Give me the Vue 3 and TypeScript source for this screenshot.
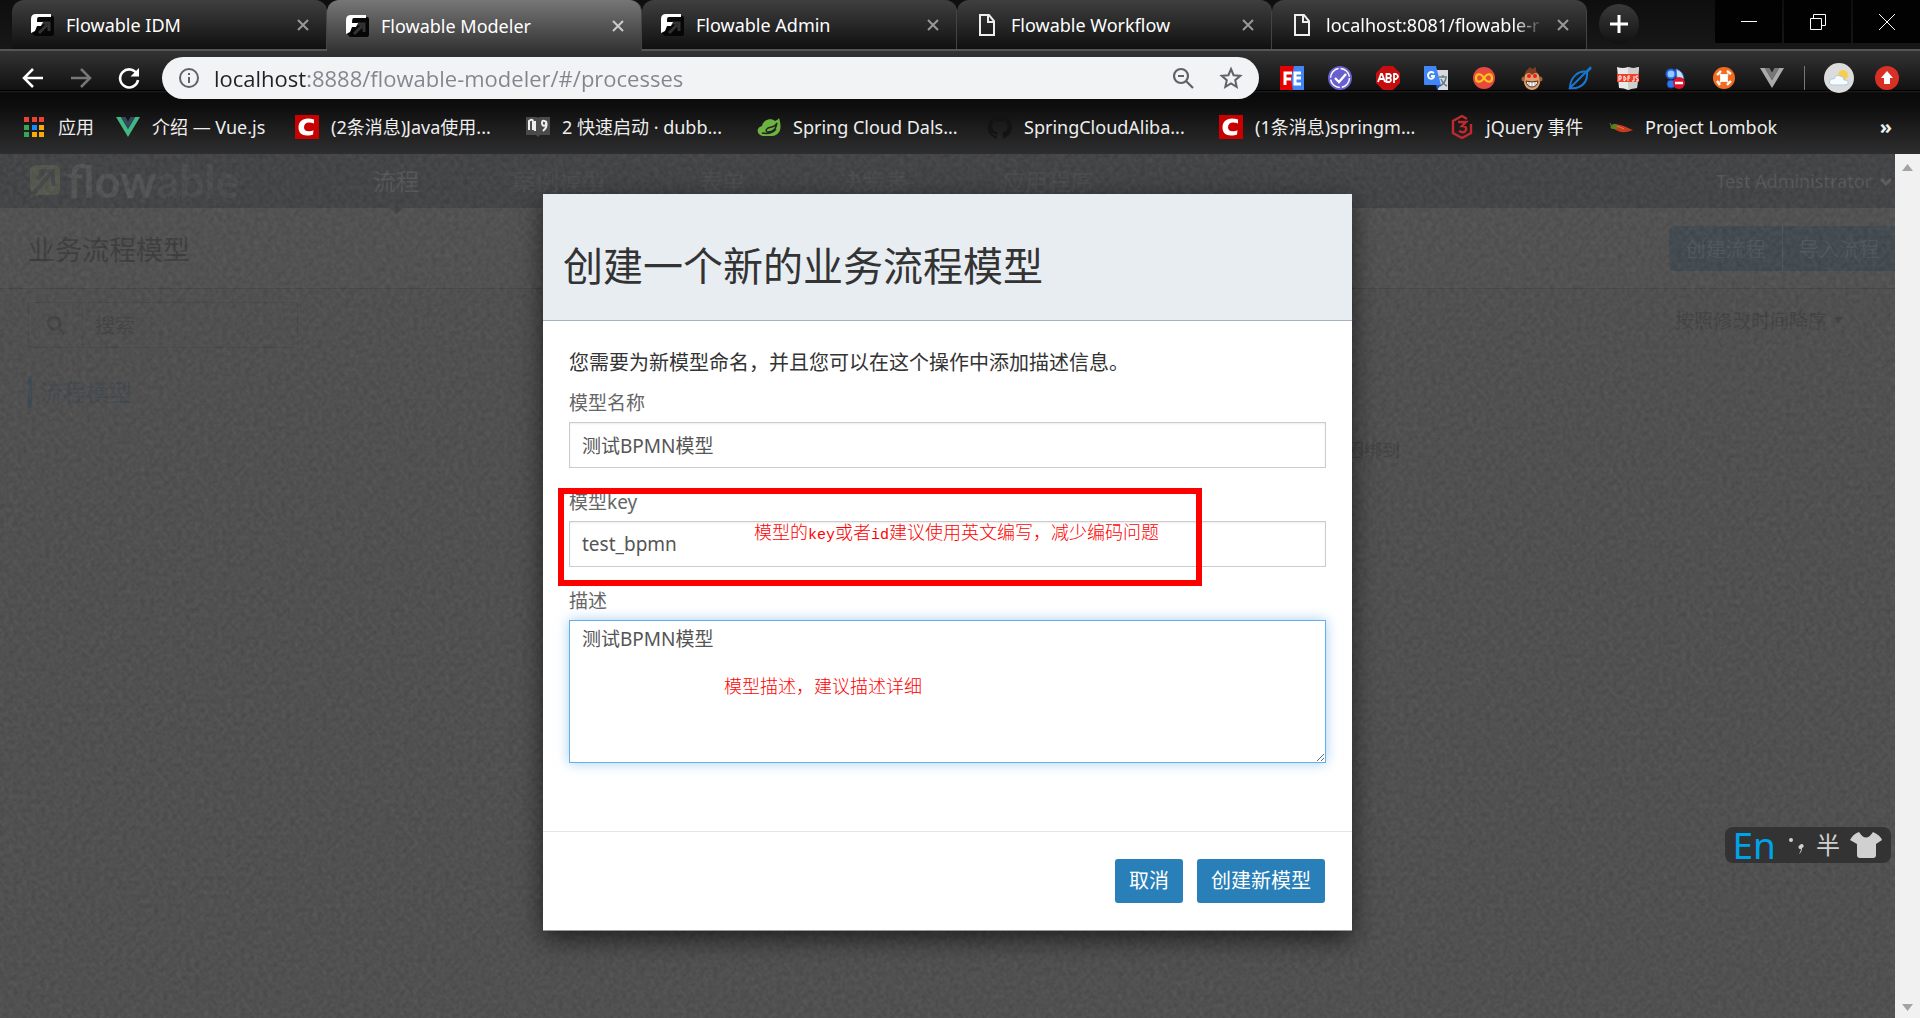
<script setup lang="ts">
import { ref } from 'vue'

interface Tab { title: string; icon: string; active?: boolean; fade?: boolean }
interface Bookmark { label: string; icon: string; width: number }

const flow = '<path d="M8 3h14q2 0 2 2v16q0 2-2 2H5l-3-3 4-4z" fill="#060606"/><path d="M9 20l8-8M12 10h7v8" fill="none" stroke="#333" stroke-width="3"/><path d="M1 20V6q0-5 5-5h15v3H9q-2 0-2 2v3h6l-2 4H7l-2 5z" fill="#fff"/>'
const page = '<path d="M5 2h9l5 6v14H5zM13 2v7h6" fill="none" stroke="#eee" stroke-width="2"/>'
const csdn = '<rect width="24" height="24" fill="#c80000"/><path d="M19 8.500V4.500q-3-1-6-1C7 3.500 3.500 7 3.500 12.500c0 5 3 8 8.500 8 2.500 0 4.500-.4 6-1l.5-4.300c-1.500.8-3 1-4.800 1-3 0-4.700-1.200-4.700-4s2-4.600 5-4.600c1.800 0 3.200.3 5 .9z" fill="#fff"/>'

const tabs: Tab[] = [
  { title: 'Flowable IDM', icon: flow },
  { title: 'Flowable Modeler', icon: flow, active: true },
  { title: 'Flowable Admin', icon: flow },
  { title: 'Flowable Workflow', icon: page },
  { title: 'localhost:8081/flowable-r', icon: page, fade: true },
]

const bookmarks: Bookmark[] = [
  { label: '应用', width: 94, icon: '<path d="M2 2h5v5H2zM10 2h5v5h-5zM17 2h5v5h-5z" fill="#ea4335"/><path d="M2 10h5v5H2zM2 17h5v5H2z" fill="#34a853"/><path d="M10 10h5v5h-5z" fill="#1a88ff"/><path d="M10 17h5v5h-5zM17 10h5v5h-5zM17 17h5v5h-5z" fill="#fbaa05"/>' },
  { label: '介绍 — Vue.js', width: 179, icon: '<path d="M0 2h5l7 12 7-12h5L12 22z" fill="#41b883"/><path d="M5 2h4.500L12 6.500 14.500 2H19l-7 12z" fill="#35495e"/>' },
  { label: '(2条消息)Java使用...', width: 231, icon: csdn },
  { label: '2 快速启动 · dubb...', width: 231, icon: '<path d="M0 2h11l1 1 1-1h11v18H14l-2 2-2-2H0z" fill="#4a4a4a"/><path d="M3 15V6q4-3 4 1v8M9 6v10M20 7q-4-3-4 1 0 4 4 2V6q2 6-3 10" fill="none" stroke="#eee" stroke-width="2"/>' },
  { label: 'Spring Cloud Dals...', width: 231, icon: '<path d="M22 3c3 9 2 17-7 18H6C-1 20-1 12 5 11 6 5 14 2 18 6q3-1 4-3z" fill="#6db33f"/><path d="M20 8c-2 5-5 3-9 5-3 2-2 4 0 4 4 0 8-2 9-9zM5 18q9 2 14-4" fill="none" stroke="#222" stroke-width="1.500"/>' },
  { label: 'SpringCloudAliba...', width: 231, icon: '<path d="M12 0a12 12 0 0 0-4 23.400c.6.1.8-.3.8-.6v-2.200c-3.300.7-4-1.400-4-1.400-.6-1.400-1.400-1.800-1.400-1.800-1-.7.1-.7.1-.7 1.200.1 1.900 1.200 1.900 1.200 1 1.800 2.800 1.300 3.500 1 .1-.8.400-1.300.7-1.600-2.600-.3-5.400-1.300-5.400-6 0-1.300.5-2.300 1.200-3.200-.1-.3-.5-1.500.1-3.200 0 0 1-.3 3.300 1.200a11 11 0 0 1 6 0C17.300 4.600 18.300 5 18.300 5c.7 1.700.200 2.900.1 3.200.8.900 1.200 1.900 1.200 3.200 0 4.600-2.800 5.600-5.500 5.900.4.400.8 1.100.8 2.200v3.300c0 .3.200.7.800.6A12 12 0 0 0 12 0z" fill="#141212"/>' },
  { label: '(1条消息)springm...', width: 231, icon: csdn },
  { label: 'jQuery 事件', width: 159, icon: '<path d="M17 4l-5-3-9 5v12l9 5 9-5V9M8 7h8l-4 4q5 0 4 4-2 4-7 1" fill="none" stroke="#c02a2f" stroke-width="2.400"/>' },
  { label: 'Project Lombok', width: 184, icon: '<path d="M5 9q8 1 12 3t7 3q-9 4-15 1-5-2-5-5z" fill="#c63c1d"/><path d="M7 11q5 1 8 3" fill="none" stroke="#e8785a"/><path d="M1 8q2 3 1 5l5 1 1-4q-3-2-6 1" fill="#5d7d22" stroke="#5d7d22"/>' },
]

const extensions: { name: string; icon: string }[] = [
  { name: 'FeHelper', icon: '<path d="M0 0h15l-3 12 2 12H0z" fill="#e60000"/><path d="M14 0h10v24H13l-2-11z" fill="#4285f4"/><path d="M5 19V7h7M5 13h6M21 7h-6v11h6M15 12h6" fill="none" stroke="#fff" stroke-width="3"/>' },
  { name: 'Check', icon: '<circle cx="12" cy="12" r="12" fill="#6a5fcf"/><circle cx="12" cy="12" r="9.500" fill="none" stroke="#fff" stroke-width="1.500" stroke-dasharray="13 2"/><path d="M7 12l4 4 7-8" fill="none" stroke="#fff" stroke-width="2.400"/>' },
  { name: 'Adblock Plus', icon: '<path d="M7 0h10l7 7v10l-7 7H7l-7-7V7z" fill="#c70d0d"/><path d="M2 16l3-8h1l3 8M3 13h5M10.500 8v8h3q3-2 0-4 3-2 0-4zM11 12h3M18 17V8h2q4 2 0 5h-2" fill="none" stroke="#fff" stroke-width="1.800"/>' },
  { name: 'Translate', icon: '<path d="M10 4h14v20H14z" fill="#d8dadd"/><path d="M15 11h8M19 9v2M22 12q-1 5-6 8M17 13q2 5 6 7" stroke="#607d8b" stroke-width="1.500" fill="none"/><path d="M0 0h12l5 19H1q-1 0-1-1z" fill="#4285f4"/><path d="M12 19h5l-4 5z" fill="#2a56c6"/><path d="M10 7Q7 5 5 7t0 5q3 2 5-1V10H7" fill="none" stroke="#fff" stroke-width="1.800"/>' },
  { name: 'Infinity', icon: '<circle cx="12" cy="12" r="11" fill="#e8483f"/><path d="M12 12c-3-5-8-5-8 0s5 5 8 0 8-5 8 0-5 5-8 0z" fill="none" stroke="#f8c51c" stroke-width="2.200"/>' },
  { name: 'Tampermonkey', icon: '<circle cx="4" cy="13" r="2.500" fill="#a75f3a"/><circle cx="20" cy="13" r="2.500" fill="#a75f3a"/><path d="M6 5l4-4 2 2 4-2v4q5 5 3 11H5Q3 10 6 5z" fill="#7b3d22"/><path d="M5 9q4-4 7 0 4-4 7 0l1 8q-2 7-8 7t-8-7z" fill="#dca06d"/><circle cx="9" cy="10" r="2" fill="#f01b1b"/><circle cx="15" cy="10" r="2" fill="#f01b1b"/><path d="M6 15q6 2 12 0-1 6-6 6t-6-6z" fill="#fff" stroke="#582c17"/><path d="M9 16v4M12 16v5M15 16v4" stroke="#777" stroke-width=".7"/>' },
  { name: 'Feather', icon: '<path d="M2 22C2 11 11 4 19 6q1 11-8 15-5 2-9 1zM1 23L23 1M19 6l4-4" fill="none" stroke="#1976d2" stroke-width="2"/>' },
  { name: 'PDF JS', icon: '<path d="M1 1q6 2 11 0 5 2 11 0l-2 21q-5 0-9 2-4-2-9-2z" fill="#e9e9e9"/><path d="M12 1q5 2 11 0l-2 21q-5 0-9 2z" fill="#cfcfcf"/><path d="M1 8h22v8H1z" fill="#f0412a"/><path d="M3 15v-5h2v3H3M8 10v5q4-2 0-5M12 15v-5h2M12 12h2M18 10v5h-2M22 10h-2v2l2 1v2h-2" fill="none" stroke="#fff" stroke-width="1"/>' },
  { name: 'Blocker', icon: '<circle cx="7" cy="8" r="4.500" fill="#8dcbff" stroke="#245ee0" stroke-width="2"/><path d="M12 3q7 2 8 10h-7z" fill="#c9ddf0" stroke="#3475e8"/><circle cx="7" cy="18" r="4" fill="#3475e8" stroke="#1746ae"/><circle cx="15" cy="17" r="6" fill="#d9152b"/><path d="M11 17h8" stroke="#fff" stroke-width="2.500"/>' },
  { name: 'Rocket', icon: '<circle cx="12" cy="12" r="11" fill="#f26b21"/><circle cx="12" cy="12" r="4" fill="#fff"/><path d="M8 8l8 8M16 8l-8 8" stroke="#fff" stroke-width="2"/><path d="M5 9l4-4M15 19l4-4M15 5l4 3M5 15l3 4" stroke="#fff" stroke-width="2.400"/>' },
  { name: 'Vue devtools', icon: '<path d="M0 2h5l7 12 7-12h5L12 22z" fill="#aaa"/><path d="M5 2h4.500L12 6.500 14.500 2H19l-7 12z" fill="#777"/>' },
]

const navItems = ['流程', '案例模型', '表单', '决策表', '应用程序']

const url = ref('localhost:8888/flowable-modeler/#/processes')
const search = ref('')
const modelName = ref('测试BPMN模型')
const modelKey = ref('test_bpmn')
const description = ref('测试BPMN模型')
</script>

<template>
  <div class="browser">
    <header class="chrome">
      <div class="tab-strip">
        <div v-for="tab in tabs" :key="tab.title" class="tab" :class="{ active: tab.active }">
          <svg class="icon" viewBox="0 0 24 24" v-html="tab.icon"></svg>
          <span class="tab-title" :class="{ fade: tab.fade }">{{ tab.title }}</span>
          <button class="plain close" aria-label="关闭标签页">
            <svg width="12" height="12" viewBox="0 0 12 12"><path d="M1 1l10 10M11 1L1 11" stroke="currentColor" stroke-width="2" /></svg>
          </button>
        </div>
        <button class="plain new-tab" aria-label="新标签页">
          <svg width="18" height="18" viewBox="0 0 18 18"><path d="M9 0v18M0 9h18" stroke="#fff" stroke-width="3" /></svg>
        </button>
        <div class="window-controls">
          <button class="plain" aria-label="最小化"><svg width="16" height="16" viewBox="0 0 16 16"><path d="M0 7.500h16" stroke="#fff" /></svg></button>
          <button class="plain" aria-label="还原"><svg width="16" height="16" viewBox="0 0 16 16" fill="none" stroke="#fff"><path d="M.5 4.500h11v11H.5zM3.500 4.500v-4h12v11h-4" /></svg></button>
          <button class="plain" aria-label="关闭"><svg width="16" height="16" viewBox="0 0 16 16"><path d="M0 0l16 16M16 0L0 16" stroke="#fff" /></svg></button>
        </div>
      </div>

      <div class="toolbar">
        <div class="history">
          <button class="plain" aria-label="后退"><svg width="24" height="24" viewBox="0 0 24 24" fill="none" stroke="#fff" stroke-width="2.500"><path d="M22 12H4M12 3l-9 9 9 9" /></svg></button>
          <button class="plain" aria-label="前进"><svg width="24" height="24" viewBox="0 0 24 24" fill="none" stroke="#777" stroke-width="2.500"><path d="M2 12h18M12 3l9 9-9 9" /></svg></button>
          <button class="plain" aria-label="重新加载"><svg width="24" height="24" viewBox="0 0 24 24"><path d="M20 8a9 9 0 1 0 1 6" fill="none" stroke="#fff" stroke-width="2.600" /><path d="M22 2v8.500h-8.500z" fill="#fff" /></svg></button>
        </div>
        <div class="address">
          <svg width="22" height="22" viewBox="0 0 22 22" fill="none" stroke="#5f6368" stroke-width="2"><circle cx="11" cy="11" r="9" /><path d="M11 10v6M11 6v2" /></svg>
          <input v-model="url" class="url" aria-label="地址" spellcheck="false">
          <button class="plain" aria-label="缩放"><svg width="24" height="24" viewBox="0 0 24 24" fill="none" stroke="#5f6368" stroke-width="2.200"><circle cx="10" cy="10" r="7" /><path d="M15 15l7 7M7 10h6" /></svg></button>
          <button class="plain" aria-label="收藏"><svg width="24" height="24" viewBox="0 0 24 24" fill="none" stroke="#5f6368" stroke-width="2"><path d="M12 3l2.600 6.200 6.700.6-5.100 4.400 1.500 6.600-5.700-3.500-5.700 3.500 1.500-6.600-5.100-4.400 6.700-.6z" /></svg></button>
        </div>
        <div class="extensions">
          <button v-for="ext in extensions" :key="ext.name" class="plain" :aria-label="ext.name">
            <svg class="icon" viewBox="0 0 24 24" v-html="ext.icon"></svg>
          </button>
        </div>
        <span class="divider"></span>
        <button class="plain profile" aria-label="用户">
          <svg width="30" height="30" viewBox="0 0 30 30"><circle cx="15" cy="15" r="15" fill="#dcdcdc" /><circle cx="19" cy="12" r="5" fill="#f8cf4d" /><path d="M8 22q-4-1-2-5 2-2 4-1 2-5 6-3 4 0 4 4 5 0 4 4l-3 1z" fill="#f8fbff" stroke="#a9cbef" /></svg>
        </button>
        <button class="plain" aria-label="更新">
          <svg width="24" height="24" viewBox="0 0 24 24"><circle cx="12" cy="12" r="12" fill="#d93025" /><path d="M12 5l6 7h-3v6H9v-6H6z" fill="#fff" /></svg>
        </button>
      </div>

      <nav class="bookmarks" aria-label="书签">
        <a v-for="mark in bookmarks" :key="mark.label" href="#" :style="{ width: mark.width + 'px' }">
          <svg class="icon" viewBox="0 0 24 24" v-html="mark.icon"></svg>
          <span>{{ mark.label }}</span>
        </a>
        <button class="plain more" aria-label="更多书签">»</button>
      </nav>
    </header>

    <div class="viewport">
      <main class="app">
        <header class="app-bar">
          <a class="logo" href="#" aria-label="flowable">
            <svg width="34" height="36" viewBox="0 0 34 36"><path d="M1 35l4-5q-3-2-3-6V8q0-6 6-6h18q6 0 6 6v18q0 6-6 6H9z" fill="#50554a" /><path d="M11 8h14v15M25 8L4 32M9 16l7-7" fill="none" stroke="#434547" stroke-width="4" /></svg>
            <span class="wordmark"><span>flow</span><span class="able">able</span></span>
          </a>
          <nav class="app-nav">
            <a v-for="(item, i) in navItems" :key="item" href="#" :class="{ current: i === 0 }">{{ item }}</a>
          </nav>
          <button class="plain user">Test Administrator
            <svg width="12" height="12" viewBox="0 0 12 12"><path d="M1 4l5 5 5-5" fill="none" stroke="#5a5b5a" stroke-width="3" /></svg>
          </button>
        </header>

        <section class="title-bar">
          <h1>业务流程模型</h1>
          <div class="title-actions">
            <button>创建流程</button>
            <button>导入流程</button>
          </div>
        </section>

        <section class="content">
          <aside>
            <label class="search">
              <svg width="20" height="20" viewBox="0 0 20 20" fill="none" stroke="#404040" stroke-width="3"><circle cx="8" cy="8" r="6" /><path d="M12 12l7 7" /></svg>
              <input v-model="search" placeholder="搜索" aria-label="搜索">
            </label>
            <a class="side-link" href="#">流程模型</a>
          </aside>
          <p class="notice">困绑到</p>
          <button class="plain sort">按照修改时间降序
            <svg width="10" height="8" viewBox="0 0 10 8"><path d="M0 0h10L5 7z" fill="#404040" /></svg>
          </button>
        </section>

        <div class="backdrop">
          <svg class="grain" width="100%" height="100%" aria-hidden="true">
            <filter id="grain" x="0" y="0" width="100%" height="100%" color-interpolation-filters="sRGB">
              <feTurbulence type="fractalNoise" baseFrequency="0.22" numOctaves="2" seed="4" />
              <feColorMatrix values="1 0 0 0 0  1 0 0 0 0  1 0 0 0 0  0 0 0 0 1" />
            </filter>
            <rect width="100%" height="100%" filter="url(#grain)" />
          </svg>
          <form class="modal" role="dialog" aria-labelledby="dialog-title" @submit.prevent>
            <header class="modal-header"><h2 id="dialog-title">创建一个新的业务流程模型</h2></header>
            <div class="modal-body">
              <p>您需要为新模型命名，并且您可以在这个操作中添加描述信息。</p>
              <div class="field">
                <label for="name">模型名称</label>
                <input id="name" v-model="modelName">
              </div>
              <div class="field">
                <label for="key">模型key</label>
                <input id="key" v-model="modelKey">
                <span class="highlight"></span>
                <span class="note key-note">模型的<span class="latin">key</span>或者<span class="latin">id</span>建议使用英文编写，减少编码问题</span>
              </div>
              <div class="field">
                <label for="description">描述</label>
                <textarea id="description" v-model="description" class="focused" spellcheck="false"></textarea>
                <span class="note text-note">模型描述，建议描述详细</span>
              </div>
            </div>
            <footer class="modal-footer">
              <button type="button">取消</button>
              <button type="submit">创建新模型</button>
            </footer>
          </form>
        </div>

        <div class="ime">
          <span class="lang">En</span>
          <svg width="20" height="28" viewBox="0 0 20 28"><circle cx="5" cy="9" r="2" fill="#d0d0d0" /><path d="M14 14a2 2 0 1 1 2 3q0 4-3 6 2-3 2-5a2 2 0 0 1-1-4z" fill="#d0d0d0" /></svg>
          <span class="half">半</span>
          <svg width="32" height="28" viewBox="0 0 32 28"><path d="M9 1q7 11 14 0 7 3 9 8l-6 4v11q0 3-3 3H10q-3 0-3-3V13L0 9q3-6 9-8z" fill="#d0d0d0" /></svg>
        </div>
      </main>
      <div class="scrollbar" aria-hidden="true">
        <svg width="11" height="7" viewBox="0 0 11 7"><path d="M0 7h11L5.500 0z" fill="#a3a3a3" /></svg>
        <svg width="11" height="7" viewBox="0 0 11 7"><path d="M0 0h11L5.500 7z" fill="#a3a3a3" /></svg>
      </div>
    </div>
  </div>
</template>

<style>
body { margin: 0; background: #4f4f4f; }
</style>

<style scoped>
* { box-sizing: border-box; }
h1, h2, p { margin: 0; font-weight: 400; }
a { color: inherit; text-decoration: none; }
svg { display: block; flex: none; }
button, input, textarea { font: inherit; color: inherit; }
.plain { display: flex; align-items: center; justify-content: center; padding: 0; border: 0; background: none; }
.icon { width: 24px; height: 24px; }

.browser {
  display: flex; flex-direction: column; min-height: 100vh;
  font-family: "Noto Sans", "Noto Sans CJK SC", sans-serif; font-size: 18px;
}
.chrome { color: #fff; background: #111; }

.tab-strip { display: flex; height: 51px; padding-left: 12px; background: linear-gradient(#0e0e0e, #171717); border-bottom: 2px solid #555; }
.tab {
  display: flex; align-items: center; gap: 12px; flex: 0 1 315px; height: 49px; padding: 0 16px 0 18px;
  border-radius: 12px 12px 0 0; background: linear-gradient(#3f3f3f, #101010); border-right: 1px solid #444;
}
.tab.active { height: 51px; background: linear-gradient(#767676, #333); }
.tab-title { flex: 1; min-width: 0; overflow: hidden; white-space: nowrap; line-height: 26px; }
.tab-title.fade { mask-image: linear-gradient(to right, #000 86%, transparent); }
.close { color: #999; width: 14px; height: 24px; }
.active .close { color: #ccc; }
.new-tab { width: 40px; height: 40px; margin: 4px 0 0 12px; border-radius: 50%; background: linear-gradient(#3a3a3a, #111); }
.window-controls { display: flex; gap: 2px; margin-left: auto; height: 43px; }
.window-controls .plain { width: 67px; background: #020202; }

.toolbar {
  display: flex; align-items: center; height: 54px; padding: 0 21px;
  background: linear-gradient(#333, #111 39px, #000 39px, #000 40px, #222 40px, #0a0a0a 42px, #0d0d0d);
}
.history { display: flex; gap: 24px; width: 141px; }
.address { display: flex; align-items: center; gap: 14px; flex: 1; height: 42px; padding: 0 16px; border-radius: 21px; background: #f1f3f4; }
.address .plain + .plain { margin-left: 10px; }
.url {
  flex: 1; min-width: 0; padding: 0; border: 0; outline: 0; font: 22px/30px "Open Sans", sans-serif; color: #80868b;
  background: linear-gradient(to right, #202124 94px, #80868b 94px); background-clip: text; -webkit-text-fill-color: transparent;
}
.extensions { display: flex; gap: 24px; margin-left: 21px; }
.divider { width: 1px; height: 24px; margin: 0 19px 0 20px; background: #777; }
.profile { margin-right: 21px; }

.bookmarks { display: flex; align-items: center; height: 49px; padding: 0 28px 5px 22px; background: linear-gradient(#0d0d0d, #2e2e2e); color: #eee; }
.bookmarks a { display: flex; align-items: center; gap: 12px; line-height: 26px; white-space: nowrap; flex: none; }
.more { margin-left: auto; font-weight: 700; font-size: 20px; line-height: 26px; }

.viewport { display: flex; flex: 1; }
.app {
  position: relative; flex: 1; min-width: 0; overflow: hidden; display: flex; flex-direction: column;
  font-size: 20px; background: #4d4d4d;
}
.app-bar { display: flex; align-items: center; height: 54px; padding-left: 28px; background: #404143; color: #484a49; }
.logo { display: flex; align-items: center; gap: 5px; width: 345px; }
.wordmark { display: flex; font: 700 45px/50px Lato, sans-serif; color: #505151; }
.able { color: #484b4b; }
.app-nav { display: flex; gap: 94px; font-size: 23px; line-height: 52px; }
.current { position: relative; color: #545555; }
.current::after { content: ""; position: absolute; left: 50%; top: 100%; margin-left: -7px; border: 7px solid transparent; border-top-color: #404143; }
.user { margin-left: auto; gap: 8px; padding-right: 3px; font-size: 18px; color: #545554; white-space: nowrap; }
.title-bar { display: flex; align-items: center; justify-content: space-between; height: 81px; padding-left: 28px; background: #4e4f4e; border-bottom: 1px solid #444; }
.title-bar h1 { padding-top: 4px; font-size: 27px; line-height: 36px; color: #3b3b3b; }
.title-actions { display: flex; overflow: hidden; border-radius: 5px 0 0 5px; }
.title-actions button { width: 113px; height: 45px; padding: 0; border: 0; background: #3f474d; color: #4e555a; }
.title-actions button + button { border-left: 1px solid #4d5458; }
.content { display: flex; align-items: flex-start; padding: 13px 52px 0 28px; color: #404040; }
.search { display: flex; align-items: center; width: 270px; height: 46px; border: 1px solid #464646; }
.search svg { margin: 0 16px 0 17px; }
.search input { width: 200px; min-width: 0; height: 44px; padding: 0 12px; border: 0; border-left: 1px solid #474747; background: none; outline: 0; }
.search input::placeholder { color: #414141; opacity: 1; }
.side-link { display: block; margin-top: 28px; padding-left: 8px; border-left: 4px solid #3b474f; font-size: 23px; line-height: 32px; color: #3f474d; }
.notice { margin: 134px auto 0 1048px; font-size: 18px; line-height: 28px; white-space: nowrap; }
.sort { gap: 6px; font-size: 19px; line-height: 28px; margin-top: 5px; white-space: nowrap; }

.backdrop {
  position: absolute; inset: 0; display: flex; justify-content: center; align-items: flex-start; padding-top: 40px;
  background:
    repeating-linear-gradient(52deg, transparent 0 3px, rgb(255 255 255 / 1%) 4px 5px, transparent 6px 9px),
    repeating-linear-gradient(-45deg, transparent 0 4px, rgb(0 0 0 / 2%) 5px 7px, transparent 8px 11px);
}
.grain { position: absolute; inset: 0; opacity: .07; pointer-events: none; }
.modal { position: relative; width: 809px; background: #fff; color: #333; box-shadow: 0 8px 24px rgb(0 0 0 / 60%); border-bottom: 1px solid #999; }
.modal-header { display: flex; align-items: center; height: 127px; padding: 18px 20px 0; background: #e8edf1; border-bottom: 1px solid #a4b1c4; }
.modal-header h2 { font-size: 40px; line-height: 56px; }
.modal-body { padding: 28px 26px 47px; }
.modal-body > p { line-height: 28px; margin-bottom: 13px; }
.field { position: relative; margin-bottom: 21px; font-size: 19px; color: #555; }
.field label { display: block; line-height: 27px; margin-bottom: 5px; color: #666; }
.field input, .field textarea { display: block; width: 100%; border: 1px solid #ccc; border-radius: 0; outline: 0; background: #fff; box-shadow: inset 0 1px 2px rgb(0 0 0 / 8%); }
.field input { height: 46px; padding: 0 12px; }
.field textarea { height: 143px; padding: 5px 12px; line-height: 27px; resize: vertical; }
.field .focused { border-color: #66afe9; box-shadow: 0 0 12px rgb(102 175 233 / 60%); }
.highlight { position: absolute; left: -11px; top: -1px; width: 644px; height: 98px; border: 6px solid #f00; pointer-events: none; }
.note { position: absolute; font: 300 18px/24px "Noto Sans CJK SC", serif; color: #f00; white-space: nowrap; pointer-events: none; }
.latin { font: 400 15px/24px "Liberation Mono", monospace; }
.key-note { left: 185px; top: 30px; }
.text-note { left: 155px; top: 85px; }
.modal-footer { display: flex; justify-content: flex-end; gap: 14px; padding: 27px; border-top: 1px solid #e5e5e5; }
.modal-footer button { height: 44px; padding: 0 14px; border: 0; border-radius: 3px; background: #2980b9; color: #fff; line-height: 28px; }

.ime { position: absolute; right: 4px; bottom: 155px; display: flex; align-items: center; gap: 10px; height: 36px; padding: 0 9px 0 8px; border-radius: 8px; background: #333; color: #d0d0d0; }
.lang { color: #00a2e8; font-size: 37px; line-height: 36px; }
.half { font-size: 24px; line-height: 36px; }
.scrollbar { display: flex; flex-direction: column; justify-content: space-between; align-items: center; width: 25px; padding: 10px 0 7px; background: #f1f1f1; }
</style>
